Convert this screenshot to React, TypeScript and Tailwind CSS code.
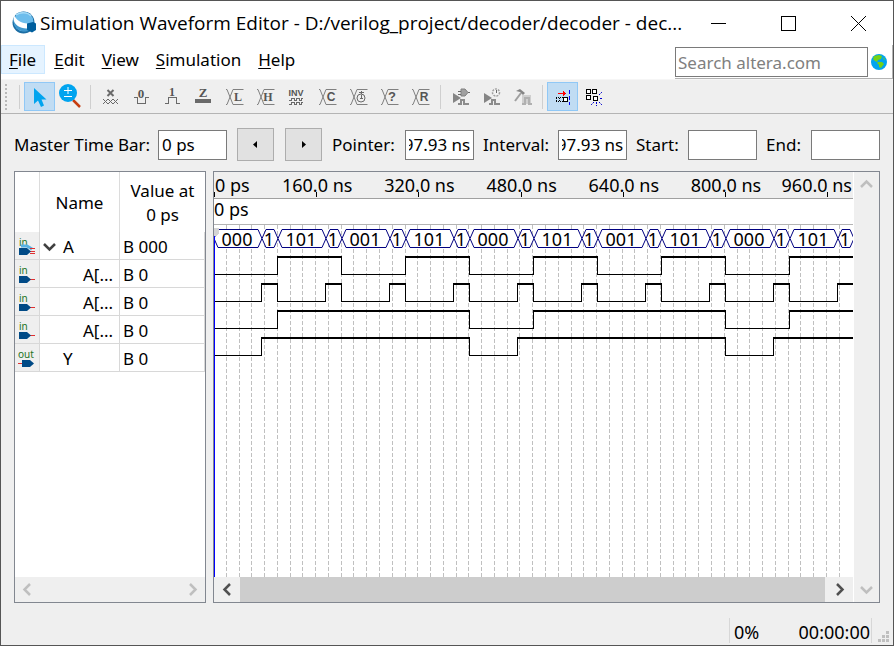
import { useEffect, useRef } from "react";
import type { ReactNode } from "react";

const INK = "#6a6a6a";

function AppLogo() {
  return (
    <svg width="24" height="24" viewBox="0 0 24 24" aria-hidden="true">
      <circle cx="11.500" cy="11.500" r="11" fill="#1d6ea4" />
      <circle cx="11.500" cy="10.500" r="9.800" fill="#6dbdec" />
      <path d="M1.500 7 C0.500 17 8 22 17 20 L18 16 C11 17 4 14 1.500 7Z" fill="#3f97cd" />
      <path d="M2 4 C4 9 9 12 15.500 12.500 L15.500 17.500 C9 18 2 14 1.500 8Z" fill="#ffffff" />
      <path d="M4 4 C8 1 16 1 19 5" stroke="#a9dcf7" strokeWidth="1.500" fill="none" />
      <path d="M15 12.500 L21 11 L24 12.500 V19 L20 21.500 L15 19Z" fill="#005f9e" />
    </svg>
  );
}

function Svg({ children }: { children: ReactNode }) {
  return (
    <svg width="18" height="18" viewBox="0 0 18 18" fill="none" stroke={INK} strokeWidth="1" shapeRendering="crispEdges" className="overflow-visible" aria-hidden="true">
      {children}
    </svg>
  );
}

function Letter({ x, y, size = 12, serif = false, children }: { x: number; y: number; size?: number; serif?: boolean; children: string }) {
  return (
    <text x={x} y={y} textAnchor="middle" fontFamily={serif ? "Liberation Serif, serif" : "Liberation Sans, sans-serif"} fontWeight="700" fontSize={size} fill="#555555" stroke="none">
      {children}
    </text>
  );
}

function BusShape() {
  return <path d="M0 1.500 h1 l6 15 h10.500 M0 16.500 h1 l6 -15 h10.500" shapeRendering="auto" stroke="#808080" />;
}

function PlayWave() {
  return (
    <>
      <path d="M1 5 v10 l8 -5z" fill="#858585" stroke="none" shapeRendering="auto" />
      <path d="M6 16 h3 v-4 h3 v4 h5" stroke="#8c8c8c" strokeWidth="2" />
    </>
  );
}

const waveTools: { name: string; icon: ReactNode }[] = [
  { name: "Forcing Unknown", icon: <Svg><path d="M5.500 2 l6 6 M11.500 2 l-6 6" strokeWidth="2" shapeRendering="auto" /><path d="M1 16 l5 -5 5 5 5 -5 M1 11 l5 5 5 -5 5 5" shapeRendering="auto" /></Svg> },
  { name: "Forcing Low", icon: <Svg><path d="M1 9.500 h3.500 v6 h8 v-6 h3.500" /><Letter x={8} y={10} size={13} serif>0</Letter></Svg> },
  { name: "Forcing High", icon: <Svg><path d="M1 15.500 h3.500 v-6 h8 v6 h3.500" /><Letter x={8} y={8} serif>1</Letter></Svg> },
  { name: "High Impedance", icon: <Svg><rect x="0" y="11" width="16" height="4" fill={INK} stroke="none" /><Letter x={8} y={9} size={13} serif>Z</Letter></Svg> },
  { name: "Weak Low", icon: <Svg><BusShape /><Letter x={12} y={13} serif>L</Letter></Svg> },
  { name: "Weak High", icon: <Svg><BusShape /><Letter x={11} y={13} serif>H</Letter></Svg> },
  { name: "Invert", icon: <Svg><Letter x={8} y={8} size={9}>INV</Letter><path d="M1 12.500 h2 v-2 h3 v2 h2 v-2 h3 v2 h2 v-2 h2 M1 16.500 h2 v-2 h3 v2 h2 v-2 h3 v2 h2 v-2 h2" /></Svg> },
  { name: "Count Value", icon: <Svg><BusShape /><Letter x={12} y={13}>C</Letter></Svg> },
  { name: "Overwrite Clock", icon: <Svg><BusShape /><circle cx="11" cy="10" r="4" fill="#efefef" shapeRendering="auto" /><path d="M11.500 3 v3 M11.500 7 v4 M9 4.500 h5 M10 10.500 h3" /></Svg> },
  { name: "Arbitrary Value", icon: <Svg><BusShape /><Letter x={11} y={13} size={13}>?</Letter></Svg> },
  { name: "Random Value", icon: <Svg><BusShape /><Letter x={12} y={13}>R</Letter></Svg> },
];

const simulationTools: { name: string; icon: ReactNode }[] = [
  { name: "Run Functional Simulation", icon: <Svg><PlayWave /><path d="M9 1 h4 l3 3.500 -3 3.500 h-4z" fill="#a0a0a0" stroke="#808080" shapeRendering="auto" /><path d="M6 3.500 h3 M6 6.500 h3 M16 4.500 h2" /></Svg> },
  { name: "Run Timing Simulation", icon: <Svg><PlayWave /><circle cx="13" cy="4.500" r="3.500" fill="#f4f4f4" stroke="#a0a0a0" strokeWidth="1.500" strokeDasharray="2 1" shapeRendering="auto" /><path d="M13.500 2 v3" /></Svg> },
  { name: "Generate Testbench", icon: <Svg><rect x="8" y="7" width="9" height="9" fill="#cfcfcf" stroke="none" /><path d="M8 16 h3 v-6 h4 v6 h3" stroke="#b0b0b0" strokeWidth="2" /><path d="M1 13 L7 5" stroke="#a0a0a0" strokeWidth="2" shapeRendering="auto" /><path d="M2 3 L6 1 L11 5 L9 7 L6 4Z" fill="#858585" stroke="none" shapeRendering="auto" /></Svg> },
];

function Separator() {
  return <span className="h-6 w-px bg-[#cfcfcf]" />;
}

function ToolButton({ name, children, active = false }: { name: string; children: ReactNode; active?: boolean }) {
  return (
    <button
      type="button"
      aria-label={name}
      className={
        active
          ? "flex h-[29px] w-[31px] shrink-0 items-center justify-center border border-[#90c8f6] bg-[#c0dcf3]"
          : "flex h-[29px] w-[31px] shrink-0 items-center justify-center"
      }
    >
      {children}
    </button>
  );
}

function Toolbar() {
  return (
    <div className="flex h-[35px] shrink-0 items-center border-t border-b border-t-[#f6f6f6] border-b-[#b4b4b4] pl-1">
      <span className="h-[26px] w-[14px]">
        <svg width="3" height="26" aria-hidden="true">
          <path d="M1 0 V26" stroke="#b8b8b8" strokeWidth="2" strokeDasharray="2 2" />
        </svg>
      </span>
      <div className="flex items-center gap-1">
        <Separator />
        <div className="flex items-center">
          <ToolButton name="Selection Tool" active>
            <svg width="16" height="22" viewBox="0 0 16 22" aria-hidden="true">
              <path d="M2 2 V18 L6 14.500 L9 21 L12 19.500 L9.500 13.500 H14.500Z" fill="#00a4ef" />
            </svg>
          </ToolButton>
          <ToolButton name="Zoom Tool">
            <svg width="24" height="25" viewBox="0 0 24 25" aria-hidden="true">
              <path d="M14 16 L21 23" stroke="#c63d10" strokeWidth="2.500" />
              <circle cx="9" cy="9" r="9" fill="#00a4ef" />
              <path d="M5 6.500 H13 M9 3 V10 M5 12.500 H13" stroke="#ffffff" />
            </svg>
          </ToolButton>
        </div>
      </div>
      <div className="flex items-center gap-1 pl-1">
        <Separator />
        <div className="flex items-center">
          {waveTools.map((t) => (
            <ToolButton key={t.name} name={t.name}>{t.icon}</ToolButton>
          ))}
        </div>
        <Separator />
        <div className="flex items-center">
          {simulationTools.map((t) => (
            <ToolButton key={t.name} name={t.name}>{t.icon}</ToolButton>
          ))}
        </div>
        <Separator />
        <div className="flex items-center">
          <ToolButton name="Snap to Grid" active>
            <svg width="18" height="18" viewBox="0 0 18 18" fill="none" shapeRendering="crispEdges" aria-hidden="true">
              <path d="M4 5.500 H10" stroke="#ff0000" />
              <path d="M9 3 v5 l3 -2.500z" fill="#ff0000" />
              <path d="M2 9.500 h8 M2 13.500 h8 M2.500 10 v4 M5.500 10 v4" stroke="#000" strokeDasharray="1 1" />
              <rect x="9.500" y="9.500" width="4" height="4" fill="#fff" stroke="#000" />
              <path d="M15.500 2 V17" stroke="#0000ff" strokeDasharray="4 2" />
            </svg>
          </ToolButton>
          <ToolButton name="Snap to Transition">
            <svg width="18" height="18" viewBox="0 0 18 18" fill="none" shapeRendering="crispEdges" aria-hidden="true">
              <path d="M1.500 1.500 h4 v4 h-4z M7.500 1.500 h4 v4 h-4z M1.500 7.500 h4 v4 h-4z M8.500 8.500 h4 v4 h-4z" fill="#fff" stroke="#000" strokeWidth="1.200" />
              <path d="M14 7 l3 -3 M15 10.500 h3 M14 14 l3 3 M11.500 14 v4 M9 14 l-3 3" stroke="#0000cc" strokeDasharray="2 1" shapeRendering="auto" />
            </svg>
          </ToolButton>
        </div>
      </div>
    </div>
  );
}

function TimeField({ id, label, value, className }: { id: string; label: string; value: string; className: string }) {
  const ref = useRef<HTMLInputElement>(null);
  useEffect(() => {
    if (ref.current) ref.current.scrollLeft = ref.current.scrollWidth;
  }, []);
  return (
    <div className="flex shrink-0 items-center">
      <label htmlFor={id} className={className}>{label}</label>
      <input ref={ref} id={id} defaultValue={value} className="h-[30px] w-[69px] border border-[#7a7a7a] bg-white px-[3px] outline-none" />
    </div>
  );
}

function StepButton({ name, d }: { name: string; d: string }) {
  return (
    <button type="button" aria-label={name} className="flex h-[33px] w-[37px] shrink-0 items-center justify-center border border-[#adadad] bg-[#e1e1e1]">
      <svg width="8" height="8" viewBox="0 0 8 8" aria-hidden="true"><path d={d} fill="#000" /></svg>
    </button>
  );
}

function Chevron({ d, color }: { d: string; color: string }) {
  return (
    <svg width="13" height="13" viewBox="0 0 13 13" fill="none" aria-hidden="true">
      <path d={d} stroke={color} strokeWidth="2.500" />
    </svg>
  );
}

const LEFT = "M9 1 L3.500 6.500 L9 12";
const RIGHT = "M4 1 L9.500 6.500 L4 12";
const UP = "M1 9 L6.500 3.500 L12 9";
const DOWN = "M1 4 L6.500 9.500 L12 4";

function PinIcon({ kind }: { kind: "bus" | "in" | "out" }) {
  return (
    <svg width="20" height="24" viewBox="0 0 20 24" className="mx-auto mt-0.5 block overflow-visible" aria-hidden="true">
      <text x={kind === "out" ? 1 : 2} y="11" fontFamily="Noto Sans, sans-serif" fontSize="10" fill="#1d7324">{kind === "out" ? "out" : "in"}</text>
      {kind === "bus" && (
        <>
          <path d="M4 11 H10 L15 14" stroke="#58b2e4" strokeWidth="3" fill="none" />
          <path d="M13 13.500 H18 M13 16.500 H18 M13 18.500 H18" stroke="#e03030" />
        </>
      )}
      {kind === "in" && <path d="M12 16.500 H18" stroke="#e03030" />}
      {kind === "out" && <path d="M1 16.500 H6" stroke="#e03030" />}
      <path d={kind === "out" ? "M5 13 H13 L17 16.500 L13 20 H5Z" : "M2 13 H10 L14 16.500 L10 20 H2Z"} fill="#004a86" />
    </svg>
  );
}

const signals: { kind: "bus" | "in" | "out"; name: string; value: string; depth: number }[] = [
  { kind: "bus", name: "A", value: "B 000", depth: 0 },
  { kind: "in", name: "A[...", value: "B 0", depth: 1 },
  { kind: "in", name: "A[...", value: "B 0", depth: 1 },
  { kind: "in", name: "A[...", value: "B 0", depth: 1 },
  { kind: "out", name: "Y", value: "B 0", depth: 0 },
];

function SignalTable() {
  return (
    <section className="flex w-[192px] shrink-0 flex-col border border-[#828790] bg-white">
      <table className="w-full table-fixed border-separate border-spacing-0">
        <colgroup>
          <col className="w-[25px]" />
          <col className="w-20" />
          <col />
        </colgroup>
        <thead>
          <tr className="h-[60px]">
            <th className="border-r border-[#dcdcdc] p-0" />
            <th className="border-r border-[#dcdcdc] p-0 pt-0.5 font-normal">Name</th>
            <th className="p-0 pt-0.5 leading-6 font-normal">Value at<br />0 ps</th>
          </tr>
        </thead>
        <tbody>
          {signals.map((s, i) => (
            <tr key={i} className="h-7">
              <td className="border-r border-b border-[#d8d8d8] bg-[#efefef] p-0"><PinIcon kind={s.kind} /></td>
              <td className="border-r border-b border-[#d8d8d8] p-0 pt-0.5">
                <div className={s.depth ? "pl-[43px]" : "flex items-center gap-1.5 pl-[3px]"}>
                  {s.depth === 0 && (
                    <span className="flex w-3.5">{s.kind === "bus" && <Chevron d={DOWN} color="#404040" />}</span>
                  )}
                  <span>{s.name}</span>
                </div>
              </td>
              <td className="border-r border-b border-[#d8d8d8] p-0 pt-0.5 pl-[3px]">{s.value}</td>
            </tr>
          ))}
        </tbody>
      </table>
      <div className="mt-auto flex h-[25px] items-center justify-between bg-[#efefef] px-1.5">
        <Chevron d={LEFT} color="#bfbfbf" />
        <Chevron d={RIGHT} color="#bfbfbf" />
      </div>
    </section>
  );
}

/* 100 ns is drawn 64 px wide; the run lasts 1000 ns. */
const STEP = 64;
const END = 640;
const TICK = 102.2;
const ticks = ["160.0 ns", "320.0 ns", "480.0 ns", "640.0 ns", "800.0 ns"];
const busWords = ["000", "101", "001", "101", "000", "101", "001", "101", "000", "101"];
const gridLines = Array.from({ length: 49 }, (_, i) => Math.round((i + 1) * 12.77 - 1) + 0.5);

const edges = {
  a2: [63, 127, 191, 255, 319, 383, 447, 511, 575],
  a0: Array.from({ length: 20 }, (_, i) => Math.floor(i / 2) * STEP + (i % 2 ? 63 : 47)),
  a1: [63, 255, 319, 511, 575],
  y: [47, 255, 303, 511, 559],
};

function Trace({ toggles, top }: { toggles: number[]; top: number }) {
  const points = [0, ...toggles.filter((t) => t < END), END];
  return (
    <g>
      {points.slice(0, -1).map((x, i) => (
        <g key={i}>
          {i % 2 ? (
            <rect x={x} y={top} width={points[i + 1] - x + 1} height="2" />
          ) : (
            <rect x={x} y={top + 18} width={points[i + 1] - x + 1} height="1" />
          )}
          {i > 0 && <rect x={x} y={top} width="1" height="19" />}
        </g>
      ))}
    </g>
  );
}

function BusCell({ from, to, label }: { from: number; to: number; label: string }) {
  return (
    <g>
      <path
        d={`M${from} 13.500 L${from + 4} 4.500 H${to - 4} L${to} 13.500 L${to - 4} 22.500 H${from + 4}Z`}
        fill="#fff"
        stroke="#000080"
      />
      <text x={(from + to) / 2 - 1} y="21" textAnchor="middle" fontSize="18" fill="#000">{label}</text>
    </g>
  );
}

function WaveView() {
  return (
    <section className="flex min-w-0 flex-1 border border-[#828790] bg-white">
      <div className="flex min-w-0 flex-1 flex-col">
        <div className="h-[27px] shrink-0 border-b border-[#a0a0a0] bg-[#efefef]">
          <svg className="block h-full w-full" fontFamily="Noto Sans, sans-serif" fontSize="18">
            <text x="1" y="20">0 ps</text>
            <rect x="0" y="20" width="1" height="5" />
            {ticks.map((t, i) => (
              <g key={t}>
                <text x={TICK * (i + 1) + 1} y="20" textAnchor="middle">{t}</text>
                <rect x={Math.round(TICK * (i + 1))} y="20" width="1" height="5" />
              </g>
            ))}
            <text x="638" y="20" textAnchor="end">960.0 ns</text>
            <rect x="613" y="20" width="1" height="5" />
          </svg>
        </div>
        <div className="h-[25px] shrink-0 text-[18px] leading-[21px]">0 ps</div>
        <div className="min-h-0 flex-1 border-t border-[#b4b4b4]">
          <svg className="block h-full w-full" fontFamily="Noto Sans, sans-serif">
            <g stroke="#c0c0c0" strokeDasharray="4 2" shapeRendering="crispEdges">
              {gridLines.map((x) => <line key={x} x1={x} x2={x} y1="0" y2="100%" />)}
            </g>
            {busWords.map((w, i) => (
              <g key={i}>
                <BusCell from={i * STEP} to={i * STEP + 48} label={w} />
                <BusCell from={i * STEP + 48} to={i * STEP + 64} label="1" />
              </g>
            ))}
            <g shapeRendering="crispEdges">
              <Trace toggles={edges.a2} top={31} />
              <Trace toggles={edges.a0} top={58} />
              <Trace toggles={edges.a1} top={85} />
              <Trace toggles={edges.y} top={112} />
              <rect x="0" y="8" width="1" height="100%" fill="#0000ff" />
              <path d="M0 3 h5 v5 l-3 3 h-2z" fill="#d4d4d4" />
            </g>
          </svg>
        </div>
        <div className="flex h-[25px] shrink-0 items-stretch bg-[#efefef]">
          <span className="flex w-[26px] items-center justify-center"><Chevron d={LEFT} color="#505050" /></span>
          <span className="flex-1 bg-[#cdcdcd]" />
          <span className="flex w-7 items-center justify-center"><Chevron d={RIGHT} color="#505050" /></span>
        </div>
      </div>
      <div className="flex w-[26px] shrink-0 flex-col items-center justify-between border-l border-white bg-[#efefef] py-1.5">
        <Chevron d={UP} color="#bfbfbf" />
        <Chevron d={DOWN} color="#bfbfbf" />
      </div>
    </section>
  );
}

function MenuItem({ label, active = false }: { label: string; active?: boolean }) {
  return (
    <button
      type="button"
      className={active ? "h-[29px] border border-[#cce8ff] bg-[#e5f3ff] pr-2 pl-[7px]" : "h-[29px] px-2"}
    >
      <span className="underline underline-offset-2">{label[0]}</span>{label.slice(1)}
    </button>
  );
}

export default function App() {
  return (
    <div className="flex h-screen flex-col overflow-hidden border border-[#555555] bg-[#efefef] font-['Noto_Sans',sans-serif] text-[17px] leading-6 text-black">
      <header className="flex h-11 shrink-0 items-center bg-white pl-[11px]">
        <AppLogo />
        <h1 className="w-0 flex-1 pl-1 font-['Open_Sans',sans-serif] text-[19px] whitespace-nowrap">
          Simulation Waveform Editor - D:/verilog_project/decoder/decoder - dec...
        </h1>
        <div className="flex shrink-0">
          <button type="button" aria-label="Minimize" className="flex h-11 w-[70px] items-center justify-center">
            <span className="h-px w-[15px] bg-black" />
          </button>
          <button type="button" aria-label="Maximize" className="flex h-11 w-[70px] items-center justify-center">
            <span className="h-[15px] w-[15px] border border-black" />
          </button>
          <button type="button" aria-label="Close" className="flex h-11 w-[70px] items-center justify-center">
            <svg width="15" height="15" aria-hidden="true"><path d="M0 0 L15 15 M15 0 L0 15" stroke="#000" /></svg>
          </button>
        </div>
      </header>

      <div className="flex h-[34px] shrink-0 justify-between bg-white">
        <nav className="flex gap-px">
          <MenuItem label="File" active />
          <MenuItem label="Edit" />
          <MenuItem label="View" />
          <MenuItem label="Simulation" />
          <MenuItem label="Help" />
        </nav>
        <div className="flex items-start gap-[3px] border-r border-b border-[#b4b4b4] pt-0.5 pr-[5px]">
          <input aria-label="Search altera.com" placeholder="Search altera.com" className="h-[30px] w-[193px] border border-[#7a7a7a] bg-white px-0.5 outline-none placeholder:text-[#808080]" />
          <button type="button" aria-label="Search" className="flex h-[30px] items-center">
            <svg width="16" height="16" viewBox="0 0 16 16" aria-hidden="true">
              <circle cx="8" cy="8" r="8" fill="#00a4ef" />
              <path d="M3 2 L8 1 L11 2 L10 5 L7 6 L6 8 L4 7 L2 5Z M7 8 L11 8 L13 10 L10 14 L8 13 L8 11 L6 9Z M12 3 L14 5 L13 6Z" fill="#74d216" />
            </svg>
          </button>
        </div>
      </div>

      <Toolbar />

      <div className="flex h-[57px] shrink-0 items-center pt-1 pl-[13px]">
        <TimeField id="master" label="Master Time Bar:" value="0 ps" className="w-36" />
        <div className="flex gap-[11px] px-2.5">
          <StepButton name="Previous transition" d="M5 0 V7 L1 3.500Z" />
          <StepButton name="Next transition" d="M2 0 V7 L6 3.500Z" />
        </div>
        <div className="flex gap-[9px]">
          <TimeField id="pointer" label="Pointer:" value="997.93 ns" className="w-[73px]" />
          <TimeField id="interval" label="Interval:" value="997.93 ns" className="w-[75px]" />
          <TimeField id="start" label="Start:" value="" className="w-[52px]" />
          <TimeField id="end" label="End:" value="" className="w-[45px]" />
        </div>
      </div>

      <main className="flex min-h-0 flex-1 gap-[7px] pr-[13px] pl-[13px]">
        <SignalTable />
        <WaveView />
      </main>

      <footer className="flex h-[42px] shrink-0 items-end justify-end pb-0.5">
        <div className="flex h-[25px] w-[143px] items-center justify-between border-x border-[#d7d7d7] pt-0.5 pr-px pl-1 text-[18px]">
          <span>0%</span>
          <span>00:00:00</span>
        </div>
        <svg width="21" height="14" viewBox="0 0 21 14" className="text-[#bfbfbf]" fill="currentColor" aria-hidden="true">
          <path d="M14 2h3v3h-3z M10 6h3v3h-3z M14 6h3v3h-3z M6 10h3v3h-3z M10 10h3v3h-3z M14 10h3v3h-3z" />
        </svg>
      </footer>
    </div>
  );
}
